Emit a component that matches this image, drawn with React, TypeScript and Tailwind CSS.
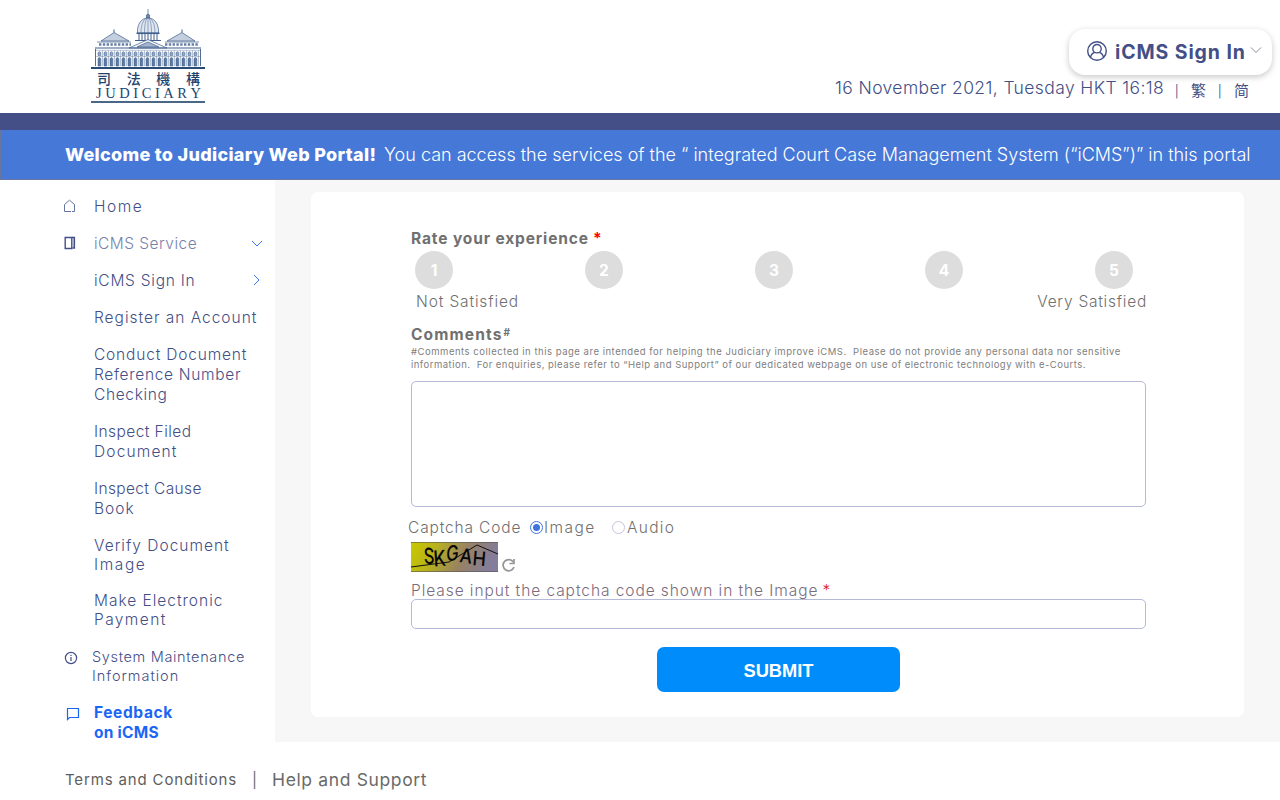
import { useState } from 'react';

const navClass = 'relative pl-[94px] whitespace-nowrap text-[#434f86]';

function Building() {
  const bays = Array.from({ length: 17 }, (_, i) => 7 + i * 6);
  return (
    <svg width="114" height="58" viewBox="0 0 114 58" className="block" fill="none" stroke="#3f5f8c" strokeWidth="0.7">
      <path d="M57 0v5M55.500 9V6q1.500-2 3 0v3z" fill="#6f88ad" />
      <path d="M46.500 24c-.6-9 4-15 10.500-15s11.100 6 10.500 15z" fill="#dfe6ef" />
      <path d="M50 24c0-8 2-12 5-15M57 9v15M64 24c0-8-2-12-5-15M53.500 24c0-8 1-12 2.500-15M60.500 24c0-8-1-12-2.500-15" strokeWidth="0.500" />
      <path d="M45.500 24.300h23" strokeWidth="1.500" />
      <path d="M48 25v6M51 25v6M54 25v6M57 25v6M60 25v6M63 25v6M66 25v6" strokeWidth="1" />
      <path d="M44 31.500h26" strokeWidth="1" />
      <path d="M10 32L23 23.500l15 8.500zM76 32l15-8.500 13 8.500z" fill="#c3cfde" />
      <path d="M23 20.500v3M91 20.500v3" strokeWidth="1" />
      <path d="M6 33h34M74 33h34" />
      <path d="M8 35.500h32M74 35.500h33" strokeDasharray="2.400 1.400" strokeWidth="2.400" opacity="0.800" />
      <path d="M38 39l19-8.500L76 39z" fill="#f2f5f9" />
      <path d="M46 38l11-5 11 5z" fill="#a3b4cc" />
      <path d="M4 39h106" strokeWidth="1.200" />
      <path d="M4 41.300h106M4 47.500h106" strokeWidth="0.500" opacity="0.700" />
      {bays.map((x) => (
        <g key={x}>
          <path d={`M${x} 46.500v-3q1.400-1.600 2.800 0v3z`} fill="#93a7c3" strokeWidth="0.500" />
          <path d={`M${x} 57v-7.500q1.400-1.800 2.800 0V57z`} fill="#5e7aa3" strokeWidth="0.500" />
          <path d={`M${x + 4.4} 41.500V57`} strokeWidth="0.600" opacity="0.700" />
        </g>
      ))}
      <path d="M4.500 40v17M109.500 40v17" strokeWidth="0.900" />
    </svg>
  );
}

function Logo() {
  return (
    <div className="flex w-[114px] flex-col text-[#23446f]">
      <Building />
      <div className="h-[2px] bg-[#294b78]" />
      <div className="mt-[2px] flex h-[15px] justify-between pl-[6px] pr-[5px] font-['Noto_Sans_CJK_TC',sans-serif] text-[14px] font-medium leading-[15px]">
        <span>司</span><span>法</span><span>機</span><span>構</span>
      </div>
      <div className="flex h-[14px] justify-between pl-[5px] pr-[4px] font-['Liberation_Serif',serif] text-[14.500px] leading-[15px]">
        {'JUDICIARY'.split('').map((c, i) => <span key={i}>{c}</span>)}
      </div>
      <div className="mt-px h-[2px] bg-[#4a6788]" />
    </div>
  );
}

function Captcha() {
  return (
    <svg width="87" height="30" viewBox="0 0 87 30" className="block">
      <defs>
        <linearGradient id="captcha-bg" x1="0" x2="1" y1="0" y2="0.15">
          <stop offset="0" stopColor="#c9c900" />
          <stop offset="0.300" stopColor="#b8b21c" />
          <stop offset="0.650" stopColor="#988261" />
          <stop offset="1" stopColor="#847c9a" />
        </linearGradient>
      </defs>
      <rect width="87" height="30" fill="url(#captcha-bg)" />
      <path d="M0 .5h87M0 29.500h87" stroke="#555" strokeOpacity="0.600" />
      <path d="M0 25L38 20L66 3L87 12" fill="none" stroke="#111" />
      <g fontFamily="Inter, sans-serif" fontWeight="500" fill="#080808" fontSize="22">
        <text transform="translate(13 21.500) rotate(4) skewX(6) scale(.76 1)">S</text>
        <text transform="translate(23 24.500) rotate(-4) scale(.82 1)">K</text>
        <text transform="translate(35 19.500) rotate(-8) skewX(-10) scale(.76 .95)">G</text>
        <text transform="translate(48 20) rotate(8) scale(.8 .9)">A</text>
        <text transform="translate(61 23) rotate(5) scale(.82 .9)">H</text>
      </g>
    </svg>
  );
}

function Radio({ checked, onClick }: { checked: boolean; onClick: () => void }) {
  return (
    <button
      type="button"
      role="radio"
      aria-checked={checked}
      onClick={onClick}
      className={`flex size-[13px] items-center justify-center rounded-full border-[1.500px] ${checked ? 'border-[#3f74dd]' : 'border-[#c4c4e0]'}`}
    >
      {checked && <span className="size-[7px] rounded-full bg-[#3f74dd]" />}
    </button>
  );
}

export default function App() {
  const [mode, setMode] = useState('image');
  const [rating, setRating] = useState(0);
  return (
    <div className="flex h-[800px] w-[1280px] flex-col overflow-hidden bg-white font-['Inter',sans-serif] font-light">
      <header className="flex h-[113px] shrink-0 justify-between pl-[91px] pr-[8px]">
        <div className="pt-[9px]"><Logo /></div>
        <div className="flex flex-col items-end pt-[29px] text-[#434f86]">
          <button className="flex h-[46px] w-[203px] items-center rounded-[16px] bg-white pl-[17px] shadow-[0_2px_6px_rgba(0,0,0,0.22)]">
            <svg width="22" height="22" viewBox="0 0 22 22" fill="none" stroke="#434f86" strokeWidth="1.400" className="mt-[-3px]">
              <circle cx="11" cy="11" r="9.300" />
              <circle cx="11" cy="8.700" r="4.200" />
              <path d="M4.500 17.500c.4-2.700 1.900-4.500 4.200-5.200M17.500 17.500c-.4-2.700-1.900-4.500-4.200-5.200" />
            </svg>
            <span className="ml-[7px] mt-[2px] w-[131px] whitespace-nowrap text-left text-[19.500px] font-bold tracking-[0.900px]">iCMS Sign In</span>
            <svg width="12" height="8" viewBox="0 0 12 8" fill="none" stroke="#8a8a96" className="ml-[4px] mt-[-4px]"><path d="M1 1.500l5 5 5-5" /></svg>
          </button>
          <div className="flex h-[26px] items-center whitespace-nowrap pr-[23px]">
            <span className="w-[330px] text-[17.500px] tracking-[0.390px]">16 November 2021, Tuesday HKT 16:18</span>
            <div className="ml-[10px] mt-[4px] flex items-center font-['Noto_Sans_CJK_TC',sans-serif] text-[15px] font-normal">
              <span className="w-[16px] text-[13px]">|</span>
              <span className="w-[27px]">繁</span>
              <span className="w-[16px] text-[13px]">|</span>
              <span className="font-['Noto_Sans_CJK_SC',sans-serif]">简</span>
            </div>
          </div>
        </div>
      </header>
      <div className="h-[17px] shrink-0 bg-[#434f86]" />
      <div className="flex h-[50px] shrink-0 items-center whitespace-nowrap border-b border-l border-[#6876a0] bg-[#4678d8] pl-[64px] text-[18px] text-white">
        <strong className="w-[319px] font-extrabold tracking-[0.310px]">Welcome to Judiciary Web Portal!</strong>
        <span className="tracking-[-0.005px]">You can access the services of the “ integrated Court Case Management System (“iCMS”)” in this portal</span>
      </div>

      <div className="flex h-[562px] shrink-0">
        <nav className="flex w-[275px] shrink-0 flex-col gap-[17px] pt-[17px] text-[15.500px] leading-[20px]">
          <a className={navClass}>
            <svg width="13" height="14" viewBox="0 0 13 14" fill="none" stroke="#6973a0" className="absolute left-[63px] top-[2px]"><path d="M9 12.500h2.500V5.500L6.500 1.200 1.500 5.500v7H8" /></svg>
            <span className="tracking-[1.500px]">Home</span>
          </a>
          <a className={navClass}>
            <svg width="12" height="14" viewBox="0 0 12 14" fill="none" stroke="#434f86" className="absolute left-[64px] top-[2px]"><path d="M1.200 1.500h6.600v11H1.200z" strokeWidth="1.400" /><path d="M8 1.500h2.300v10.500h-1.800" strokeWidth="1.600" /></svg>
            <span className="tracking-[0.470px] text-[#7780ac]">iCMS Service</span>
            <svg width="12" height="8" viewBox="0 0 12 8" fill="none" stroke="#3a76ed" className="absolute left-[251px] top-[6px]"><path d="M1 1l5 5 5-5" /></svg>
          </a>
          <a className={navClass}>
            <span className="tracking-[0.750px]">iCMS Sign In</span>
            <svg width="8" height="12" viewBox="0 0 8 12" fill="none" stroke="#3a76ed" className="absolute left-[253px] top-[3px]"><path d="M1 1l5 5-5 5" /></svg>
          </a>
          <a className={`${navClass} tracking-[0.980px]`}>Register an Account</a>
          <a className={navClass}>
            <span className="block tracking-[0.820px]">Conduct Document</span>
            <span className="block tracking-[0.680px]">Reference Number</span>
            <span className="block tracking-[0.650px]">Checking</span>
          </a>
          <a className={navClass}>
            <span className="block tracking-[0.430px]">Inspect Filed</span>
            <span className="block tracking-[1.150px]">Document</span>
          </a>
          <a className={navClass}>
            <span className="block tracking-[0.360px]">Inspect Cause</span>
            <span className="block tracking-[1px]">Book</span>
          </a>
          <a className={`${navClass} pt-px leading-[18.500px]`}>
            <span className="block tracking-[1px]">Verify Document</span>
            <span className="block tracking-[1.600px]">Image</span>
          </a>
          <a className={`${navClass} leading-[19px]`}>
            <span className="block tracking-[0.980px]">Make Electronic</span>
            <span className="block tracking-[1.400px]">Payment</span>
          </a>
          <a className="relative whitespace-nowrap pl-[92px] pt-px text-[14.500px] leading-[19px] text-[#434f86]">
            <svg width="14" height="14" viewBox="0 0 14 14" fill="none" stroke="#434f86" strokeWidth="1.200" className="absolute left-[64px] top-[5px]"><circle cx="7" cy="7" r="5.600" /><path d="M7 6v4M7 3.800v1.200" /></svg>
            <span className="block tracking-[0.660px]">System Maintenance</span>
            <span className="block tracking-[0.980px]">Information</span>
          </a>
          <a className="relative whitespace-nowrap pl-[94px] pt-px font-bold text-[#1c66f5]">
            <svg width="14" height="14" viewBox="0 0 14 14" fill="none" stroke="#1c66f5" strokeWidth="1.200" className="absolute left-[66px] top-[5px]"><path d="M1.500 12.500v-11h11v9H3.500z" /></svg>
            <span className="block tracking-[0.620px]">Feedback</span>
            <span className="block tracking-[0.250px]">on iCMS</span>
          </a>
        </nav>

        <main className="flex-1 bg-[#f7f7f7] pl-[36px] pr-[36px] pt-[12px]">
          <form className="flex h-[525px] flex-col rounded-[7px] bg-white pl-[100px] pr-[98px] pt-[37px] text-[#707070]" onSubmit={(e) => e.preventDefault()}>
            <h2 className="h-[22px] whitespace-nowrap text-[15.500px] font-bold leading-[20px] tracking-[0.870px]">Rate your experience<span className="ml-[4px] text-[#f00]">*</span></h2>
            <div className="flex justify-between pl-[4px] pr-[13px]">
              {[1, 2, 3, 4, 5].map((n) => (
                <button key={n} type="button" onClick={() => setRating(n)} className={`flex size-[38px] items-center justify-center rounded-full pt-[2px] text-[15.500px] font-bold text-white ${rating === n ? 'bg-[#4678d8]' : 'bg-[#ddd]'}`}>{n}</button>
              ))}
            </div>
            <div className="flex h-[36px] justify-between pl-[5px] text-[15.500px] leading-[26px]">
              <span className="tracking-[0.860px]">Not Satisfied</span>
              <span className="mr-[-1px] tracking-[0.750px]">Very Satisfied</span>
            </div>
            <h2 className="flex h-[21px] text-[15.500px] font-bold leading-[20px] tracking-[1.150px]">Comments<span className="ml-px mt-[-3px] text-[10px]">#</span></h2>
            <p className="h-[35px] whitespace-pre text-[9.500px] font-normal leading-[13px] text-[#808080]">
              <span className="mt-[-1px] block tracking-[0.520px]">{'#Comments collected in this page are intended for helping the Judiciary improve iCMS.  Please do not provide any personal data nor sensitive'}</span>
              <span className="block tracking-[0.480px]">{'information.  For enquiries, please refer to “Help and Support” of our dedicated webpage on use of electronic technology with e-Courts.'}</span>
            </p>
            <textarea className="h-[126px] w-full shrink-0 resize-none rounded-[5px] border border-[#b5bad8] outline-none" />
            <div className="ml-[-3px] flex h-[35px] items-center whitespace-nowrap pt-[6px] text-[15.500px]">
              <span className="w-[122px] tracking-[0.850px]">Captcha Code</span>
              <Radio checked={mode === 'image'} onClick={() => setMode('image')} />
              <span className="ml-[1px] w-[68px] tracking-[1.450px]">Image</span>
              <Radio checked={mode === 'audio'} onClick={() => setMode('audio')} />
              <span className="ml-[2px] tracking-[1.300px]">Audio</span>
            </div>
            <div className="flex h-[39px] shrink-0">
              <Captcha />
              <svg width="16" height="16" viewBox="0 0 16 16" fill="none" stroke="#959595" strokeWidth="1.700" className="ml-[3px] mt-[15px]"><path d="M12.300 5A5.600 5.600 0 1 0 13 10" /><path d="M13 2v4.500H8.500" /></svg>
            </div>
            <label className="h-[18px] shrink-0 whitespace-nowrap text-[15.500px] leading-[19px] tracking-[0.930px] text-[#7b6c7e]">Please input the captcha code shown in the Image<span className="ml-[4px] text-[#d22]">*</span></label>
            <input className="h-[30px] w-full shrink-0 rounded-[5px] border border-[#b5bad8] outline-none" />
            <button className="ml-[246px] mt-[18px] h-[45px] w-[243px] shrink-0 rounded-[7px] bg-[#008cfa] pt-[2px] font-['Liberation_Sans',sans-serif] text-[18.300px] font-bold text-white">SUBMIT</button>
          </form>
        </main>
      </div>

      <footer className="flex h-[58px] items-center whitespace-nowrap pl-[65px] pt-[18px] text-[#6a6a6a]">
        <a className="w-[187px] text-[15px] font-normal tracking-[0.850px] text-[#5e5e5e]">Terms and Conditions</a>
        <span className="w-[20px] text-[15px] font-normal">|</span>
        <a className="text-[17.500px] font-normal tracking-[0.640px]">Help and Support</a>
      </footer>
    </div>
  );
}
